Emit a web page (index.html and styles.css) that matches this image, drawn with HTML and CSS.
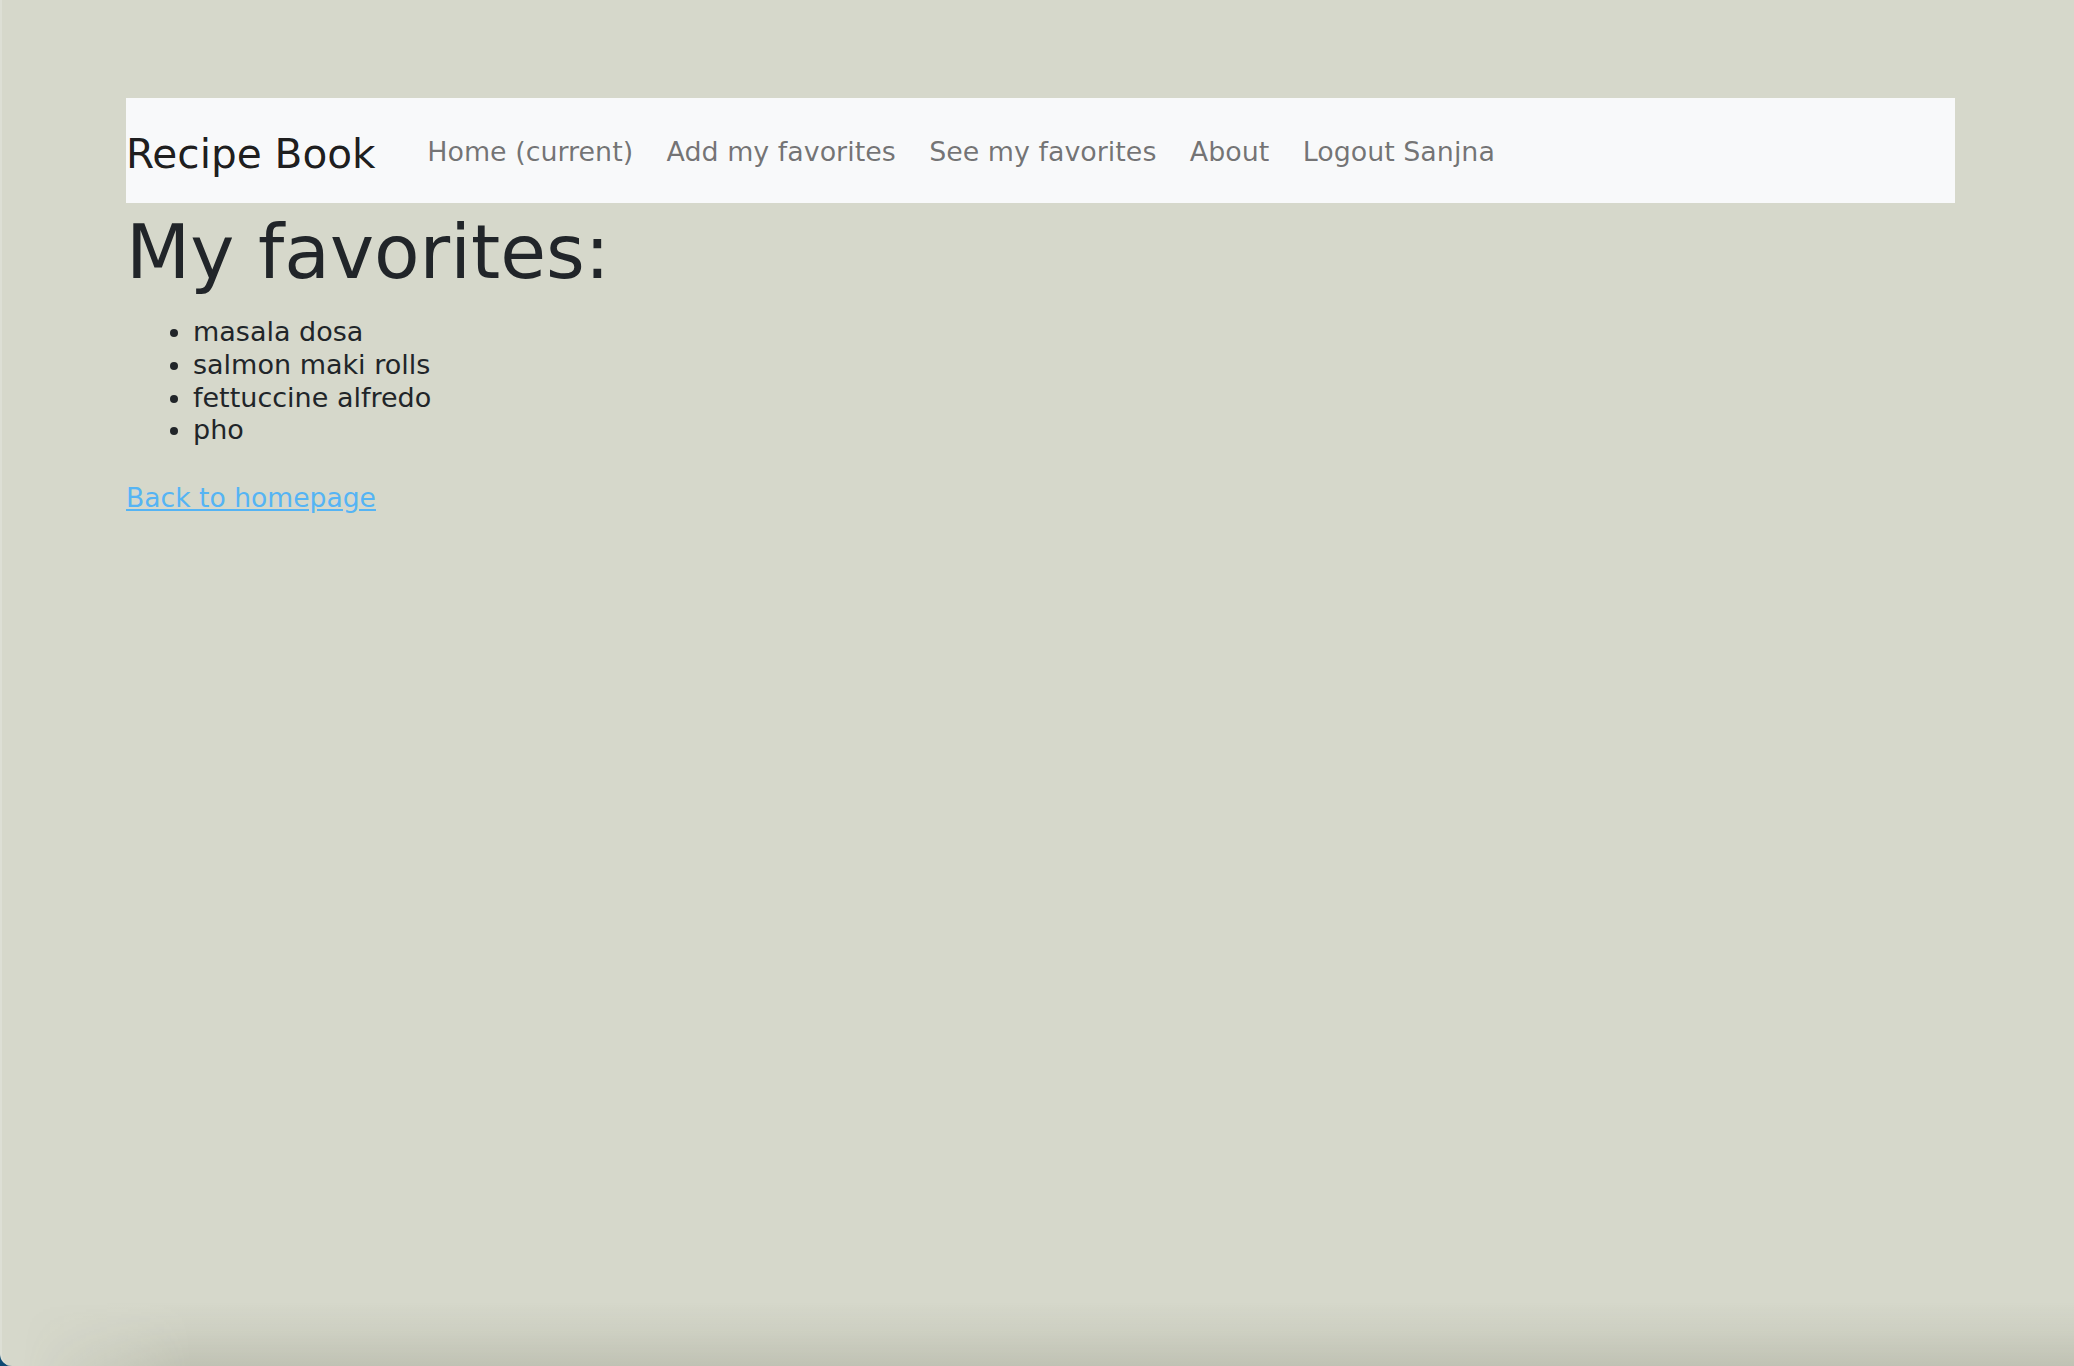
FILE: index.html
```html
<!DOCTYPE html>
<html lang="en">
<head>
<meta charset="utf-8">
<title>Recipe Book</title>
<link rel="stylesheet" href="styles.css">
</head>
<body>
<div class="window">
  <nav class="navbar">
    <a class="brand" href="#">Recipe Book</a>
    <ul class="nav">
      <li><a class="nav-link" href="#">Home (current)</a></li>
      <li><a class="nav-link" href="#">Add my favorites</a></li>
      <li><a class="nav-link" href="#">See my favorites</a></li>
      <li><a class="nav-link" href="#">About</a></li>
      <li><a class="nav-link" href="#">Logout Sanjna</a></li>
    </ul>
  </nav>
  <h1 class="title">My favorites:</h1>
  <ul class="favs">
    <li>masala dosa</li>
    <li>salmon maki rolls</li>
    <li>fettuccine alfredo</li>
    <li>pho</li>
  </ul>
  <p class="back"><a href="#">Back to homepage</a></p>
  <div class="shade"></div>
</div>
</body>
</html>
```
FILE: styles.css
```css
html {
  background: #0e4a73;
  height: 100%;
}
body {
  margin: 0;
  height: 100%;
  font-family: "DejaVu Sans", "Liberation Sans", sans-serif;
  color: #212529;
}
.window {
  position: relative;
  box-sizing: border-box;
  height: 100%;
  overflow: hidden;
  background: #d6d8cb;
  border-left: 2px solid #dddfd5;
  border-bottom-left-radius: 12px;
  padding: 98px 119px 0 124px;
}
.navbar {
  display: flex;
  align-items: center;
  height: 105px;
  background: #f8f9fa;
}
.brand {
  font-size: 40.6px;
  color: rgba(0, 0, 0, 0.9);
  text-decoration: none;
  padding-top: 6px;
  margin-right: 35px;
  white-space: nowrap;
}
.nav {
  display: flex;
  list-style: none;
  margin: 0;
  padding: 0;
}
.nav-link {
  display: block;
  font-size: 26.9px;
  color: rgba(0, 0, 0, 0.55);
  text-decoration: none;
  padding: 2px 16.7px 0;
  white-space: nowrap;
}
.title {
  font-size: 74.5px;
  font-weight: 400;
  line-height: 1.2;
  margin: 5px 0 19px;
  color: #212529;
}
.favs {
  margin: 0 0 35px;
  padding-left: 67px;
  font-size: 27px;
  line-height: 32.6px;
}
.back {
  margin: 0;
  font-size: 26.6px;
  line-height: 32.6px;
}
.back a {
  color: #55b4f4;
  text-decoration: underline;
}
.shade {
  position: absolute;
  left: 0;
  right: 0;
  bottom: 0;
  height: 64px;
  background: linear-gradient(to bottom, rgba(60, 62, 40, 0) 0%, rgba(60, 62, 40, 0.06) 50%, rgba(60, 62, 40, 0.14) 100%);
  -webkit-mask-image: linear-gradient(to right, transparent 20px, #000 190px);
  mask-image: linear-gradient(to right, transparent 20px, #000 190px);
  pointer-events: none;
}
```
